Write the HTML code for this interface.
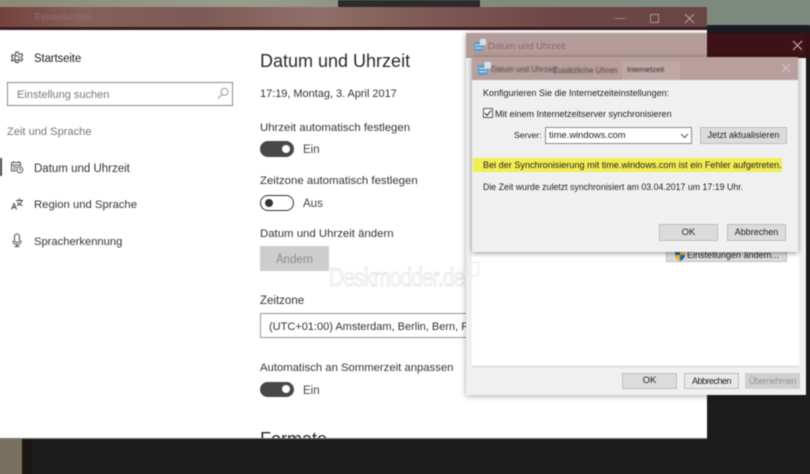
<!DOCTYPE html>
<html style="overflow:hidden;width:810px;height:474px"><head><meta charset="utf-8"><style>
html,body{margin:0;padding:0}
body{width:810px;height:474px;overflow:hidden;position:relative;background:#1c1c1c;font-family:"Liberation Sans",sans-serif;color:#222}
div,svg{position:absolute}
.t{white-space:nowrap;line-height:14px;font-size:12px;transform-origin:0 50%}
.s{font-size:9px;line-height:12px;color:#222}
.btn{background:#dcdcdc;border:1px solid #bdbdbd;box-sizing:border-box;text-align:center;font-size:9px;color:#222}
#clip{left:0;top:0;width:810px;height:474px;overflow:hidden}
#wrap{left:-6px;top:-6px;width:822px;height:486px;filter:blur(.45px);overflow:hidden}
#all{left:6px;top:6px;width:810px;height:474px}
</style></head><body><div id="clip"><div id="wrap">
<div style="left:0;top:0;width:822px;height:32px;background:linear-gradient(90deg,#8b8a76,#9a9c8c 30%,#848a7c 60%,#7d8a80)"></div>
<div style="left:0;top:13px;width:8px;height:21px;background:#74423c"></div>
<div style="left:0;top:33px;width:8px;height:3px;background:#3c1a1e"></div>
<div style="left:0;top:36px;width:8px;height:408px;background:#fff"></div>
<div style="left:0;top:444px;width:8px;height:42px;background:#7a7060"></div>
<div style="left:8px;top:474px;width:20px;height:12px;background:#7a7060"></div>
<div style="left:28px;top:474px;width:10px;height:12px;background:#1a1712"></div>
<div style="left:38px;top:474px;width:784px;height:12px;background:#1c1c1c"></div>
<div style="left:810px;top:36px;width:12px;height:450px;background:#1c1c1c"></div>
<div style="left:810px;top:39px;width:12px;height:24px;background:#3c1216"></div>
<div id="all">
<!-- desktop -->
<div style="left:0;top:0;width:810px;height:26px;background:linear-gradient(90deg,#8b8a76,#9a9c8c 30%,#848a7c 60%,#7d8a80)"></div>
<div style="left:338px;top:0;width:142px;height:8px;background:#2b2b2b"></div>
<div style="left:707px;top:25px;width:103px;height:8px;background:#1c1c24"></div>
<div style="left:707px;top:33px;width:103px;height:24px;background:#3c1216"></div>
<div style="left:707px;top:57px;width:103px;height:417px;background:#1c1c1c"></div>
<div style="left:0;top:438px;width:810px;height:36px;background:#1c1c1c"></div>
<div style="left:0;top:438px;width:22px;height:36px;background:#7a7060"></div>
<div style="left:22px;top:438px;width:10px;height:36px;background:#1a1712"></div>
<!-- settings window -->
<div style="left:0;top:7px;width:707px;height:21px;background:linear-gradient(90deg,#74423c,#85605a 12%,#7c5a55 28%,#8f7068 45%,#7f5a56 60%,#6b4644 80%,#694644)"></div>
<div style="left:0;top:27px;width:707px;height:3px;background:#3c1a1e"></div>
<div class="t" style="left:35px;top:11px;font-size:9.500px;color:#8f6f6c">Einstellungen</div>
<div style="left:615px;top:18px;width:10px;height:1px;background:#9c8682"></div>
<div style="left:650px;top:14px;width:7px;height:7px;border:1px solid #a8928e"></div>
<svg style="left:684px;top:13px" width="11" height="11"><path d="M1 1L10 10M10 1L1 10" stroke="#b09a96" stroke-width="1.100"/></svg>
<div style="left:0;top:30px;width:707px;height:408px;background:#fff"></div>
<div style="left:0;top:437.500px;width:707px;height:1.500px;background:#777"></div>
<!-- sidebar -->
<svg style="left:10px;top:51px" width="14" height="14" viewBox="0 0 14 14" fill="none" stroke="#444" stroke-width="1"><path d="M5.800 1h2.400l.4 1.800 1.300.6 1.600-.9 1.200 1.900-1.400 1.200v1.400l1.400 1.200-1.200 1.900-1.600-.9-1.300.6-.4 1.800H5.800l-.4-1.800-1.300-.6-1.600.9L1.300 9.200l1.400-1.200V6.600L1.300 5.400l1.200-1.900 1.600.9 1.300-.6z"/><circle cx="7" cy="7" r="2.200"/></svg>
<div class="t" style="left:34px;top:52px;font-size:11.500px;color:#222;letter-spacing:-.15px">Startseite</div>
<div style="left:7px;top:82px;width:226px;height:24px;box-sizing:border-box;border:1.500px solid #8a8a8a"></div>
<div class="t" style="left:17px;top:88px;font-size:11px;color:#777">Einstellung suchen</div>
<svg style="left:217px;top:87px" width="12" height="13" viewBox="0 0 12 13" fill="none" stroke="#999" stroke-width="1"><circle cx="7.500" cy="4.800" r="3.500"/><path d="M5 7.500L1 11.500"/></svg>
<div class="t" style="left:7px;top:125px;font-size:11.100px;color:#777">Zeit und Sprache</div>
<div style="left:0;top:158px;width:2px;height:18px;background:#444"></div>
<svg style="left:10px;top:160px" width="14" height="14" viewBox="0 0 14 14" fill="none" stroke="#555" stroke-width="1"><path d="M1.500 2.500H10.500V6M1.500 2.500V11H6M1.500 5H10.500M3.500 1V3M8.500 1V3M3 7H7M3 9H5.500"/><circle cx="9.800" cy="9.800" r="3"/><path d="M9.800 8.300V9.800H11"/></svg>
<div class="t" style="left:34px;top:162px;font-size:11.500px;color:#333">Datum und Uhrzeit</div>
<svg style="left:10px;top:197px" width="14" height="14" viewBox="0 0 14 14" fill="none" stroke="#444" stroke-width="1"><path d="M1.500 12.500L4 6.500L6.500 12.500M2.500 10.500H5.500M6 3.500H13M9.500 1.500V3.500M12 3.500C11 6.500 9 8 7 8.500M7.500 5C8.500 7 10 8 12.500 8.500"/></svg>
<div class="t" style="left:34px;top:198px;font-size:11.300px;color:#333">Region und Sprache</div>
<svg style="left:10px;top:233px" width="14" height="15" viewBox="0 0 14 15" fill="none" stroke="#444" stroke-width="1"><rect x="4.500" y="1" width="5" height="8.500" rx="2.500"/><path d="M3 7.500V8.500C3 10.500 4.800 11.500 7 11.500S11 10.500 11 8.500V7.500M7 11.500V13.500M4.500 13.500H9.500"/></svg>
<div class="t" style="left:34px;top:235px;font-size:11.200px;color:#333">Spracherkennung</div>
<!-- main -->
<div class="t" style="left:260px;top:51px;font-size:18px;line-height:20px;color:#2a2a2a">Datum und Uhrzeit</div>
<div class="t" style="left:260px;top:87px;font-size:11px;color:#333;letter-spacing:-.03px">17:19, Montag, 3. April 2017</div>
<div class="t" style="left:260px;top:121px;font-size:11.400px;color:#333">Uhrzeit automatisch festlegen</div>
<div style="left:260px;top:141px;width:34px;height:16px;border-radius:8px;background:#4a4846"></div>
<div style="left:282px;top:145px;width:8px;height:8px;border-radius:50%;background:#fff"></div>
<div class="t" style="left:303px;top:143px;font-size:11.500px;color:#444">Ein</div>
<div class="t" style="left:260px;top:174px;font-size:11.400px;color:#333">Zeitzone automatisch festlegen</div>
<div style="left:260px;top:195px;width:34px;height:16px;box-sizing:border-box;border-radius:8px;border:1.500px solid #333"></div>
<div style="left:265px;top:199px;width:8px;height:8px;border-radius:50%;background:#333"></div>
<div class="t" style="left:303px;top:197px;font-size:11.500px;color:#444">Aus</div>
<div class="t" style="left:260px;top:227px;font-size:11.400px;color:#333">Datum und Uhrzeit ändern</div>
<div style="left:260px;top:246px;width:69px;height:25px;background:#cdcdcd"></div>
<div class="t" style="left:276px;top:253px;font-size:11.500px;color:#8c8c8c">Ändern</div>
<div class="t" style="left:329px;top:261px;font-size:26px;line-height:32px;color:#fff;-webkit-text-stroke:.7px #dcdcdc;letter-spacing:-1px;transform:scaleX(.8)">Deskmodder.de</div>
<div class="t" style="left:260px;top:294px;font-size:11.500px;color:#333">Zeitzone</div>
<div style="left:260px;top:313px;width:300px;height:25px;box-sizing:border-box;border:1.500px solid #999"></div>
<div class="t" style="left:269px;top:320px;font-size:11px;color:#333">(UTC+01:00) Amsterdam, Berlin, Bern, Rom</div>
<div class="t" style="left:260px;top:361px;font-size:11.300px;color:#333">Automatisch an Sommerzeit anpassen</div>
<div style="left:260px;top:382px;width:34px;height:15px;border-radius:8px;background:#4a4846"></div>
<div style="left:282px;top:385px;width:8px;height:8px;border-radius:50%;background:#fff"></div>
<div class="t" style="left:303px;top:384px;font-size:11.500px;color:#444">Ein</div>
<div style="left:0;top:424px;width:707px;height:14px;overflow:hidden"><div class="t" style="left:260px;top:5px;font-size:18px;line-height:20px;color:#2a2a2a">Formate</div></div>
<!-- outer dialog -->
<div style="left:466px;top:33px;width:340px;height:362px;background:#f0f0f0;box-shadow:0 1px 6px rgba(0,0,0,.35)"></div>
<div style="left:466px;top:33px;width:241px;height:25px;background:#b49c9a"></div>
<div style="left:707px;top:33px;width:99px;height:25px;background:#3c1216"></div>
<svg style="left:473px;top:39px" width="13" height="13" viewBox="0 0 13 13"><rect x="1" y="3" width="9" height="9" fill="#5a9ccc"/><rect x="7" y="0" width="6" height="6" fill="#cfe4ef"/><path d="M2 6H9M2 9H9" stroke="#cfe4ef"/></svg>
<div class="t" style="left:488px;top:39px;font-size:9.300px;color:#866a6c">Datum und Uhrzeit</div>
<svg style="left:792px;top:40px" width="11" height="11"><path d="M1 1L10 10M10 1L1 10" stroke="#a89490" stroke-width="1.300"/></svg>
<div style="left:472px;top:58px;width:327px;height:308px;background:#fff;border-bottom:1px solid #d0d0d0"></div>
<div class="btn" style="left:622px;top:373px;width:55px;height:16px;line-height:14px;font-size:9.500px">OK</div>
<div class="btn" style="left:684px;top:373px;width:55px;height:16px;line-height:14px;background:#e8e8e8;letter-spacing:-.5px">Abbrechen</div>
<div class="btn" style="left:745px;top:373px;width:55px;height:16px;line-height:16px;background:#cfcfcf;border:0;color:#999;letter-spacing:-.5px">Übernehmen</div>
<div class="btn" style="left:666px;top:246px;width:121px;height:16px"></div>
<div class="t s" style="left:687px;top:249px;color:#223">Einstellungen ändern...</div>
<svg style="left:675px;top:250px" width="10" height="11" viewBox="0 0 10 11"><path d="M0 1.500L5 0L10 1.500V5C10 8 7.500 10 5 11C2.500 10 0 8 0 5Z" fill="#2e62b0"/><path d="M5 0L10 1.500V5H5ZM0 5H5V11C2.500 10 0 8 0 5Z" fill="#e8b830"/></svg>
<!-- inner dialog -->
<div style="left:472px;top:57px;width:326px;height:195px;background:#f0f0f0;box-shadow:0 1px 5px rgba(0,0,0,.45)"></div>
<div style="left:472px;top:57px;width:326px;height:23px;background:#b89f9d"></div>
<div style="left:622px;top:62px;width:58px;height:18px;background:#bfa8a6"></div>
<svg style="left:478px;top:62px" width="14" height="14" viewBox="0 0 13 13"><rect x="0" y="3" width="9" height="9" fill="#5a9ccc"/><rect x="6" y="0" width="6" height="6" fill="#cfe4ef"/><path d="M1 6H8M1 9H8" stroke="#cfe4ef"/></svg>
<div class="t" style="left:491px;top:63px;font-size:7.800px;color:#4a3c3c;filter:blur(.9px)">Datum und Uhrzeit</div>
<div class="t" style="left:553px;top:64px;font-size:8px;color:#4a3c3c;filter:blur(.9px)">Zusätzliche Uhren</div>
<div class="t" style="left:627px;top:63px;font-size:7.500px;color:#2e2424;filter:blur(.4px)">Internetzeit</div>
<svg style="left:781px;top:63px" width="10" height="10"><path d="M1 1L9 9M9 1L1 9" stroke="#d2c2c0" stroke-width="1.100"/></svg>
<div class="t s" style="left:483px;top:87px">Konfigurieren Sie die Internetzeiteinstellungen:</div>
<div style="left:483px;top:108px;width:10px;height:10px;box-sizing:border-box;border:1px solid #555;background:#fff"></div>
<svg style="left:483px;top:108px" width="10" height="10"><path d="M2 5L4 7.500L8 2.500" fill="none" stroke="#333" stroke-width="1.100"/></svg>
<div class="t s" style="left:495px;top:108px">Mit einem Internetzeitserver synchronisieren</div>
<div class="t s" style="left:514px;top:129px;font-size:8.500px">Server:</div>
<div style="left:545px;top:127px;width:147px;height:17px;box-sizing:border-box;border:1px solid #8a8a8a;background:#fff"></div>
<div class="t s" style="left:549px;top:129px;font-size:9.400px">time.windows.com</div>
<svg style="left:680px;top:133px" width="9" height="6"><path d="M1 1L4.500 4.500L8 1" fill="none" stroke="#555"/></svg>
<div class="btn" style="left:700px;top:127px;width:87px;height:17px;line-height:15px">Jetzt aktualisieren</div>
<div style="left:473px;top:158px;width:309px;height:14px;background:#f1ee55"></div>
<div class="t s" style="left:483px;top:159px;font-size:9.100px">Bei der Synchronisierung mit time.windows.com ist ein Fehler aufgetreten.</div>
<div class="t s" style="left:483px;top:181px;font-size:8.800px">Die Zeit wurde zuletzt synchronisiert am 03.04.2017 um 17:19 Uhr.</div>
<div class="btn" style="left:659px;top:224px;width:59px;height:17px;line-height:15px;font-size:9.500px">OK</div>
<div class="btn" style="left:727px;top:224px;width:59px;height:17px;line-height:15px">Abbrechen</div>
<div style="left:467px;top:262px;width:10px;height:12px;border:1px solid #e8e8e8"></div>
</div></div></div></body></html>
